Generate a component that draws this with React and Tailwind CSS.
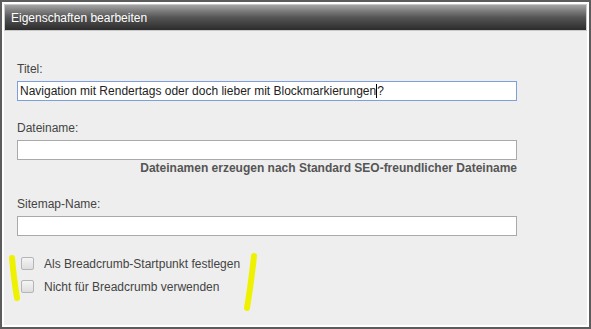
export default function App() {
  return (
    <div className="relative w-[591px] h-[329px] border-2 border-[#5c5c5c] bg-white p-[2px] font-['Liberation_Sans',Arial,sans-serif]">
      <div className="flex flex-col h-full w-full">
        {/* Header */}
        <div className="h-[27px] border border-[#c9c9c9] bg-gradient-to-b from-[#a3a3a3] via-[#555] to-[#2c2c2c] flex items-center pl-[6px] text-white text-[12px] leading-none">
          Eigenschaften bearbeiten
        </div>

        {/* Body */}
        <div className="flex-1 bg-[#eeeeee] pl-[13px] pt-[31px] text-[12px] text-[#444]">
          <div className="leading-[14px]">Titel:</div>
          <div className="mt-[5px] w-[500px] h-[20px] border border-[#7f9fdc] bg-white pl-[2px] flex items-center text-[12px] text-[#222] leading-none">
            <span>Navigation mit Rendertags oder doch lieber mit Blockmarkierungen</span>
            <span className="inline-block w-px h-[14px] bg-black" />
            <span>?</span>
          </div>

          <div className="mt-[20px] leading-[14px]">Dateiname:</div>
          <div className="mt-[5px] w-[500px] h-[20px] border border-[#a9a9a9] bg-white" />
          <div className="w-[500px] text-right font-bold text-[#555] leading-[14px] mt-[1px]">
            Dateinamen erzeugen nach Standard SEO-freundlicher Dateiname
          </div>

          <div className="mt-[22px] leading-[14px]">Sitemap-Name:</div>
          <div className="mt-[5px] w-[500px] h-[20px] border border-[#a9a9a9] bg-white" />

          <div className="mt-[21px] flex flex-col gap-[10px] pl-[4px] text-[12px]">
            <label className="flex items-center gap-[10px] leading-none">
              <span className="w-[13px] h-[13px] rounded-[2px] border border-[#b5b5b5] bg-gradient-to-b from-[#f4f4f4] to-[#dedede]" />
              <span>Als Breadcrumb-Startpunkt festlegen</span>
            </label>
            <label className="flex items-center gap-[10px] leading-none">
              <span className="w-[13px] h-[13px] rounded-[2px] border border-[#b5b5b5] bg-gradient-to-b from-[#f4f4f4] to-[#dedede]" />
              <span>Nicht für Breadcrumb verwenden</span>
            </label>
          </div>
        </div>
      </div>

      {/* yellow marker strokes */}
      <svg className="absolute left-0 top-0 pointer-events-none" width="591" height="329">
        <path d="M10 256 Q12 278 15 296" stroke="#eef200" strokeWidth="6" strokeLinecap="round" fill="none" />
        <path d="M252 254 Q249 282 245 306" stroke="#eef200" strokeWidth="6" strokeLinecap="round" fill="none" />
      </svg>
    </div>
  );
}
